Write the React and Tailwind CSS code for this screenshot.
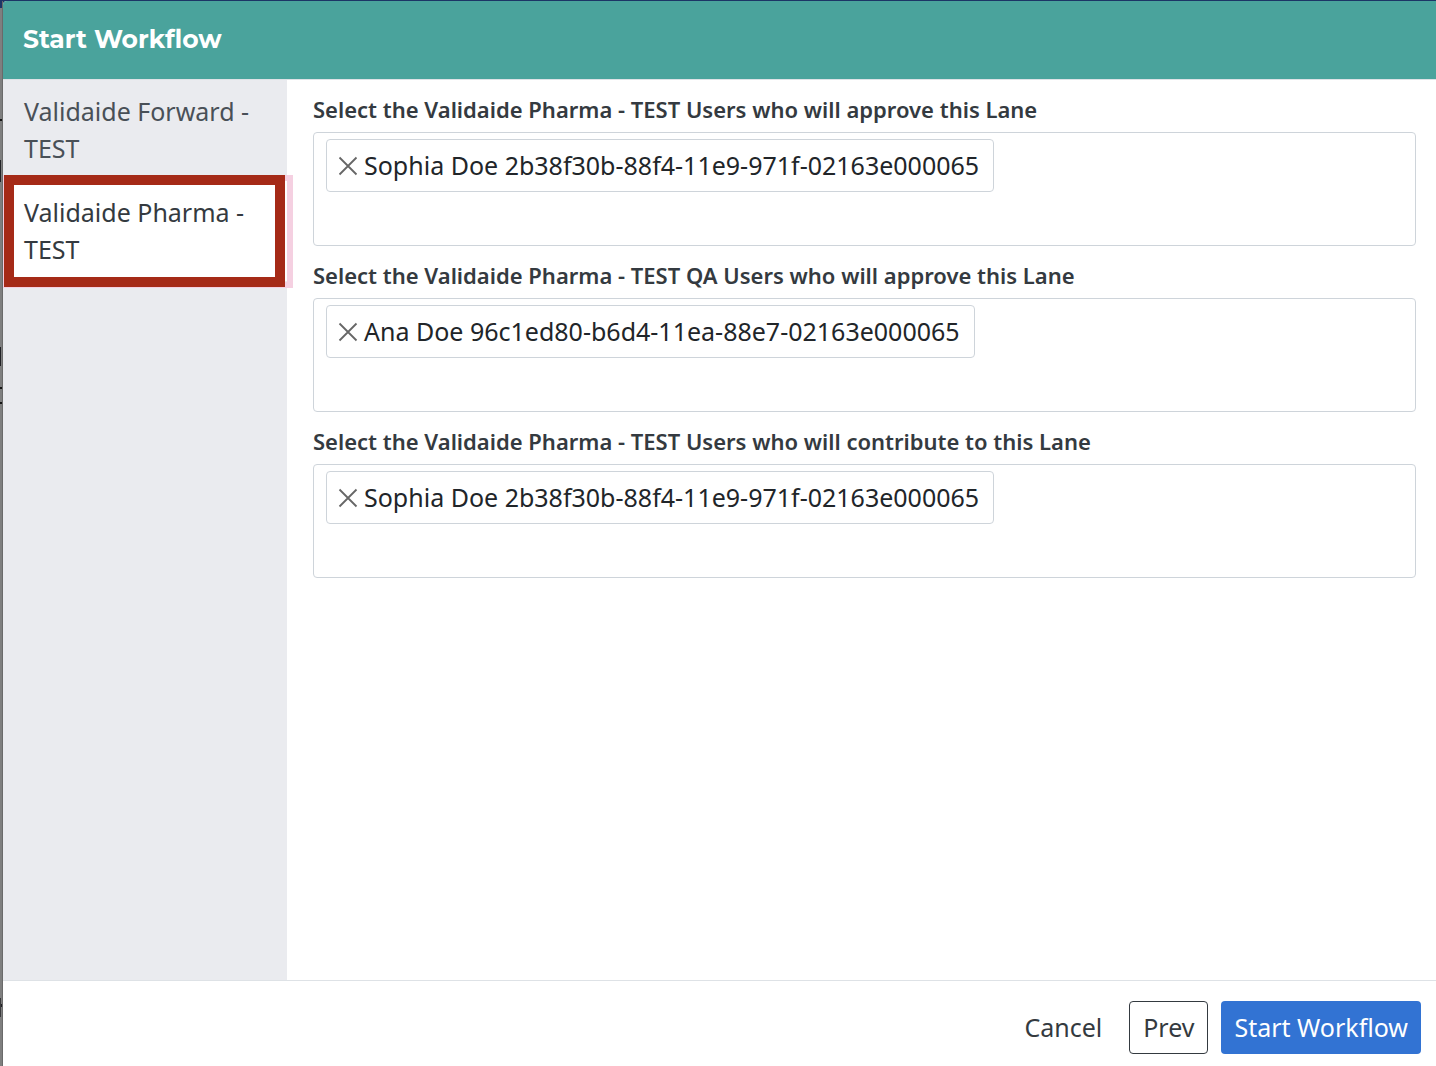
import React from "react";

const organisations = [
  { name: "Validaide Forward - TEST", active: false },
  { name: "Validaide Pharma - TEST", active: true },
];

const fields = [
  {
    id: "approvers",
    label: "Select the Validaide Pharma - TEST Users who will approve this Lane",
    user: "Sophia Doe 2b38f30b-88f4-11e9-971f-02163e000065",
  },
  {
    id: "qa-approvers",
    label: "Select the Validaide Pharma - TEST QA Users who will approve this Lane",
    user: "Ana Doe 96c1ed80-b6d4-11ea-88e7-02163e000065",
  },
  {
    id: "contributors",
    label: "Select the Validaide Pharma - TEST Users who will contribute to this Lane",
    user: "Sophia Doe 2b38f30b-88f4-11e9-971f-02163e000065",
  },
];

/* Dimmed page edge that stays visible beside the dialog */
function Backdrop() {
  return (
    <div className="relative w-[3px] shrink-0 overflow-hidden border-r border-[#6a6a6a] bg-[#7f7f7f]" aria-hidden="true">
      <div className="h-[7px] bg-[#1c3566]" />
      <span className="absolute left-0 top-[118px] h-[2px] w-[3px] bg-[#151515]" />
      <span className="absolute left-0 top-[159px] h-[22px] w-px bg-[#222226]" />
      <span className="absolute left-0 top-[346px] h-[19px] w-px bg-[#222226]" />
      <span className="absolute left-0 top-[386px] h-[2px] w-[3px] bg-[#151515]" />
      <span className="absolute left-0 top-[401px] h-[2px] w-[3px] bg-[#151515]" />
      <span className="absolute left-0 top-[997px] h-[19px] w-px bg-[#3a3a3c]" />
      <span className="absolute left-px top-[1003px] h-[3px] w-[2px] bg-[#222226]" />
    </div>
  );
}

function UserField({ id, label, user }) {
  return (
    <div>
      <label htmlFor={id} className="block pb-2 text-[22px] leading-[30px] font-semibold text-[#343a40]">
        {label}
      </label>
      <div className="flex min-h-[114px] flex-wrap content-start items-start rounded border border-[#ced4da] px-3 py-1.5">
        <div className="flex h-[53px] items-center gap-1.5 rounded border border-[#ced4da] pr-3.5 pl-[11px] text-[#212529]">
          <button type="button" aria-label={"Remove " + user}>
            <svg width="20" height="20" viewBox="0 0 20 20" fill="none" stroke="#666" strokeWidth="1.8">
              <path d="M1.500 1.500 18.500 18.500M18.500 1.500 1.500 18.500" />
            </svg>
          </button>
          <span>{user}</span>
        </div>
        <input id={id} type="text" className="h-10 w-full outline-none" />
      </div>
    </div>
  );
}

export default function App() {
  return (
    <div className="flex min-h-screen bg-[#1c3566] pt-px font-['Noto_Sans',sans-serif] text-[25px] leading-[37px]">
      <Backdrop />
      <div role="dialog" aria-labelledby="title" className="flex min-w-0 grow flex-col overflow-hidden rounded-tl bg-white">
        <header className="border-b border-[#dee2e6] bg-[#4aa39c] px-5 pt-[19px] pb-[21px]">
          <h1 id="title" className="font-['Montserrat','Inter',sans-serif] text-[25px] leading-[38px] font-bold text-white">
            Start Workflow
          </h1>
        </header>

        <div className="flex grow">
          <nav className="flex w-[284px] shrink-0 flex-col gap-px bg-[#eaebef]">
            {organisations.map((org) => (
              <div key={org.name} className={org.active ? "relative bg-white" : ""}>
                <button
                  type="button"
                  className={
                    org.active
                      ? "w-full px-[21px] py-[13px] text-left text-[#343a40]"
                      : "w-full px-[21px] py-[13px] text-left text-[#495057]"
                  }
                >
                  {org.name}
                </button>
                {org.active && (
                  <>
                    <span className="pointer-events-none absolute -top-1.5 -right-1.5 -bottom-[7px] left-0 border-6 border-[#f5d0e1]" />
                    <span className="pointer-events-none absolute -top-1.5 right-0.5 -bottom-1.5 left-px border-10 border-[#a52a17]" />
                  </>
                )}
              </div>
            ))}
          </nav>

          <main className="flex min-w-0 grow flex-col gap-3.5 py-3.5 pr-5 pl-[26px]">
            {fields.map((f) => (
              <UserField key={f.id} {...f} />
            ))}
          </main>
        </div>

        <footer className="flex items-center justify-end gap-[13px] border-t border-[#dee2e6] px-[15px] pt-5 pb-3 text-[#343a40]">
          <button type="button" className="h-[53px] px-3.5">Cancel</button>
          <button type="button" className="h-[53px] rounded border border-[#343a40] px-[13px]">Prev</button>
          <button type="button" className="h-[53px] rounded bg-[#3273d3] px-[13px] text-white">Start Workflow</button>
        </footer>
      </div>
    </div>
  );
}
